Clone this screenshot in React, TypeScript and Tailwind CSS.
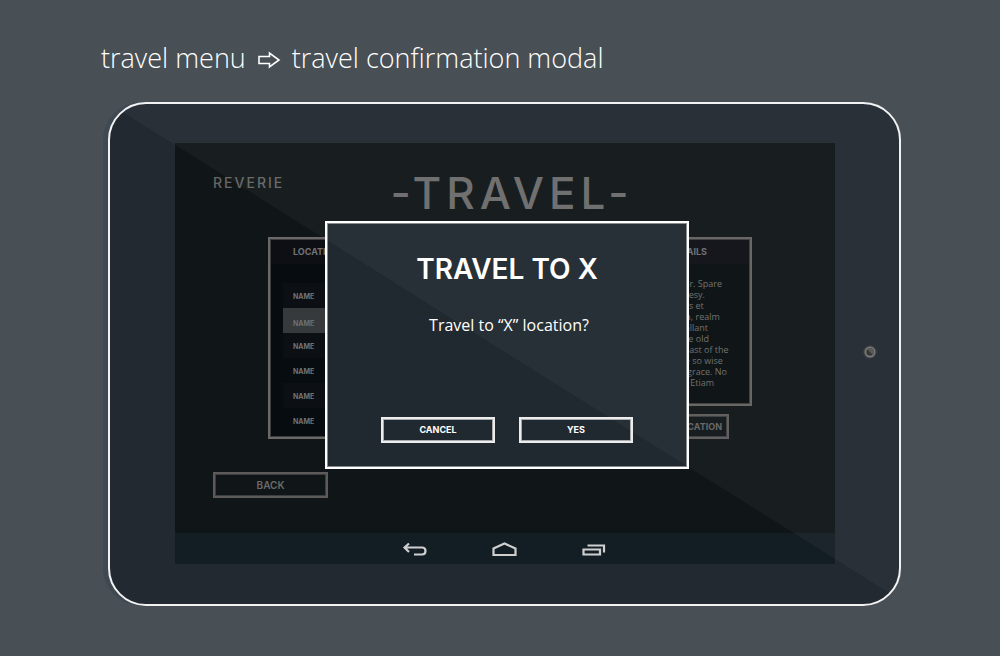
import React from "react";

const locations = [
  { id: 1, selected: false },
  { id: 2, selected: true },
  { id: 3, selected: false },
  { id: 4, selected: false },
  { id: 5, selected: false },
  { id: 6, selected: false },
];

const details = [
  "Lorem ipsum dolor. Spare",
  "simple good courtesy.",
  "Nullam nunc turpis et",
  "lectus urna magna, realm",
  "of another kind gallant",
  "knights beyond the old",
  "kingdom gave a feast of the",
  "harvest, who were so wise",
  "with manner and grace. No",
  "harm befell them. Etiam",
];

function ArrowIcon() {
  return (
    <svg aria-hidden="true" viewBox="0 0 24 20" className="mt-1 h-5 w-6" fill="none" stroke="#fff" strokeWidth="1.6">
      <path d="M2 6.500h10.500V3l9.500 7-9.500 7v-3.500H2z" />
    </svg>
  );
}

function LocationsPanel() {
  return (
    <section className="h-[202px] w-56 border-2 border-[#6a6967] bg-[#070c10] shadow-[inset_0_0_0_1px_#3c3d3e]">
      <h2 className="m-px flex h-6 items-center bg-[#0d0f15] pl-[22px] text-[9px] font-bold text-[#737373]">
        LOCATIONS
      </h2>
      <ul className="mt-[19px] ml-[13px]">
        {locations.map((l) => (
          <li key={l.id} className="odd:bg-[#0c0f14]">
            <button
              type="button"
              className={
                l.selected
                  ? "flex h-[25px] w-full items-center bg-[#363a3c] pt-2 pl-[10px] text-[7px] font-bold text-[#6f6f6f]"
                  : "flex h-[25px] w-full items-center pt-1 pl-[10px] text-[7px] font-bold text-[#737373]"
              }
            >
              NAME
            </button>
          </li>
        ))}
      </ul>
    </section>
  );
}

function DetailsPanel() {
  return (
    <div className="flex w-[158px] flex-col gap-2">
      <section className="h-[169px] border-2 border-[#63625f] bg-[#080d0f] shadow-[inset_0_0_0_1px_#3c3d3e]">
        <h2 className="m-px flex h-6 items-center justify-end bg-[#0d0f14] pr-[42px] text-[9px] font-bold text-[#6d6d6d]">
          DETAILS
        </h2>
        <p className="mt-[14px] ml-[17px] text-[9px] leading-[11px] whitespace-nowrap text-[#6d6d6d] [font-family:'Open_Sans',sans-serif]">
          {details.map((line) => (
            <span key={line} className="block">
              {line}
            </span>
          ))}
        </p>
      </section>
      <button
        type="button"
        className="mr-[23px] h-[25px] border-2 border-[#5c5b59] pr-[5px] text-right text-[9px] font-bold whitespace-nowrap text-[#636363] shadow-[inset_0_0_0_1px_#3c3d3e]"
      >
        TO LOCATION
      </button>
    </div>
  );
}

function Modal() {
  return (
    <div className="absolute inset-0 flex items-start justify-center pt-[78px] pl-1">
      <div
        role="dialog"
        aria-labelledby="modal-title"
        className="flex h-[248px] w-[364px] flex-col items-center border-2 border-white bg-[#212930] pt-[30px] text-white shadow-[inset_0_0_0_1px_#85898c]"
      >
        <h2 id="modal-title" className="text-[28px] leading-8 font-semibold">
          TRAVEL TO X
        </h2>
        <p className="mt-7 pl-1 text-base leading-6 [font-family:'Open_Sans',sans-serif]">Travel to “X” location?</p>
        <div className="mt-auto mb-6 flex gap-6">
          <button
            type="button"
            className="h-[26px] w-[114px] border-2 border-[#ececec] text-[9px] font-bold shadow-[inset_0_0_0_1px_#a8abad]"
          >
            CANCEL
          </button>
          <button
            type="button"
            className="h-[26px] w-[114px] border-2 border-[#ececec] text-[9px] font-bold shadow-[inset_0_0_0_1px_#a8abad]"
          >
            YES
          </button>
        </div>
      </div>
    </div>
  );
}

function NavBar() {
  return (
    <nav className="flex h-[31px] items-center justify-center gap-[65px] bg-[#131e24] pr-0.5">
      <button type="button" aria-label="Back">
        <svg viewBox="0 0 25 16" className="h-4 w-[25px]" fill="none" stroke="#cfcfcf" strokeWidth="2.200">
          <path d="M7 2.500 2.500 6.500l4.500 4.500M3 6.500h17q3.500 0 3.500 3.500t-3.500 3.500h-8" />
        </svg>
      </button>
      <button type="button" aria-label="Home">
        <svg viewBox="0 0 25 16" className="h-4 w-[25px]" fill="none" stroke="#cfcfcf" strokeWidth="2.200">
          <path d="M1.500 14V7.500l11-5 11 5V14z" />
        </svg>
      </button>
      <button type="button" aria-label="Recent apps">
        <svg viewBox="0 0 25 16" className="h-4 w-[25px]" fill="none" stroke="#cfcfcf" strokeWidth="2.200">
          <path d="M1.500 8.500h16.500v5H1.500zM5.500 4.500H22v7" />
        </svg>
      </button>
    </nav>
  );
}

export default function App() {
  return (
    <main className="min-h-screen bg-[#484f55] pt-10 pr-[99px] pb-[50px] pl-[101px] [font-family:Inter,sans-serif]">
      <h1 className="flex h-9 items-center gap-[11px] text-[27px] font-light whitespace-nowrap text-white [font-family:'Open_Sans',sans-serif]">
        <span>travel menu</span>
        <ArrowIcon />
        <span>travel confirmation modal</span>
      </h1>

      <div className="relative mt-[26px] ml-[7px] rounded-[38px] border-2 border-[#f2f2f2] bg-[#222931] pt-[39px] pr-16 pb-10 pl-[65px] shadow-[-5px_0_0_#3f4952]">
        <div className="relative bg-[#101618]">
          <div className="flex h-[390px] flex-col">
            <header className="grid grid-cols-[180px_1fr_166px] pt-[23px]">
              <span className="pt-[7px] pl-[38px] text-[14px] leading-5 font-medium tracking-[2px] text-[#666]">
                REVERIE
              </span>
              <h2 className="text-center text-[44px] leading-[54px] font-medium tracking-[5px] whitespace-nowrap text-[#6b6b6b]">
                -TRAVEL-
              </h2>
            </header>
            <div className="mt-[17px] flex items-start justify-between pr-[83px] pl-[93px]">
              <LocationsPanel />
              <DetailsPanel />
            </div>
            <button
              type="button"
              className="mt-[33px] ml-[38px] h-[26px] w-[115px] border-2 border-[#5c5b59] text-[10px] font-semibold text-[#6a6a6a] shadow-[inset_0_0_0_1px_#3c3d3e]"
            >
              BACK
            </button>
          </div>
          <NavBar />
          <Modal />
        </div>
        <svg aria-hidden="true" viewBox="0 0 14 14" className="absolute top-1/2 right-[22px] h-3.5 w-3.5 -translate-y-[9px]">
          <circle cx="7" cy="7" r="6.500" fill="#454545" />
          <circle cx="7" cy="7" r="4.500" fill="#303030" stroke="#77787a" strokeWidth="1.500" />
          <path d="M4.200 4.200a4 4 0 0 1 5.600 5.600z" fill="#555" />
        </svg>
        <div className="pointer-events-none absolute inset-0 rounded-[36px] bg-white/[0.033] [clip-path:polygon(0_0,100%_0,100%_99%)]" />
      </div>
    </main>
  );
}
